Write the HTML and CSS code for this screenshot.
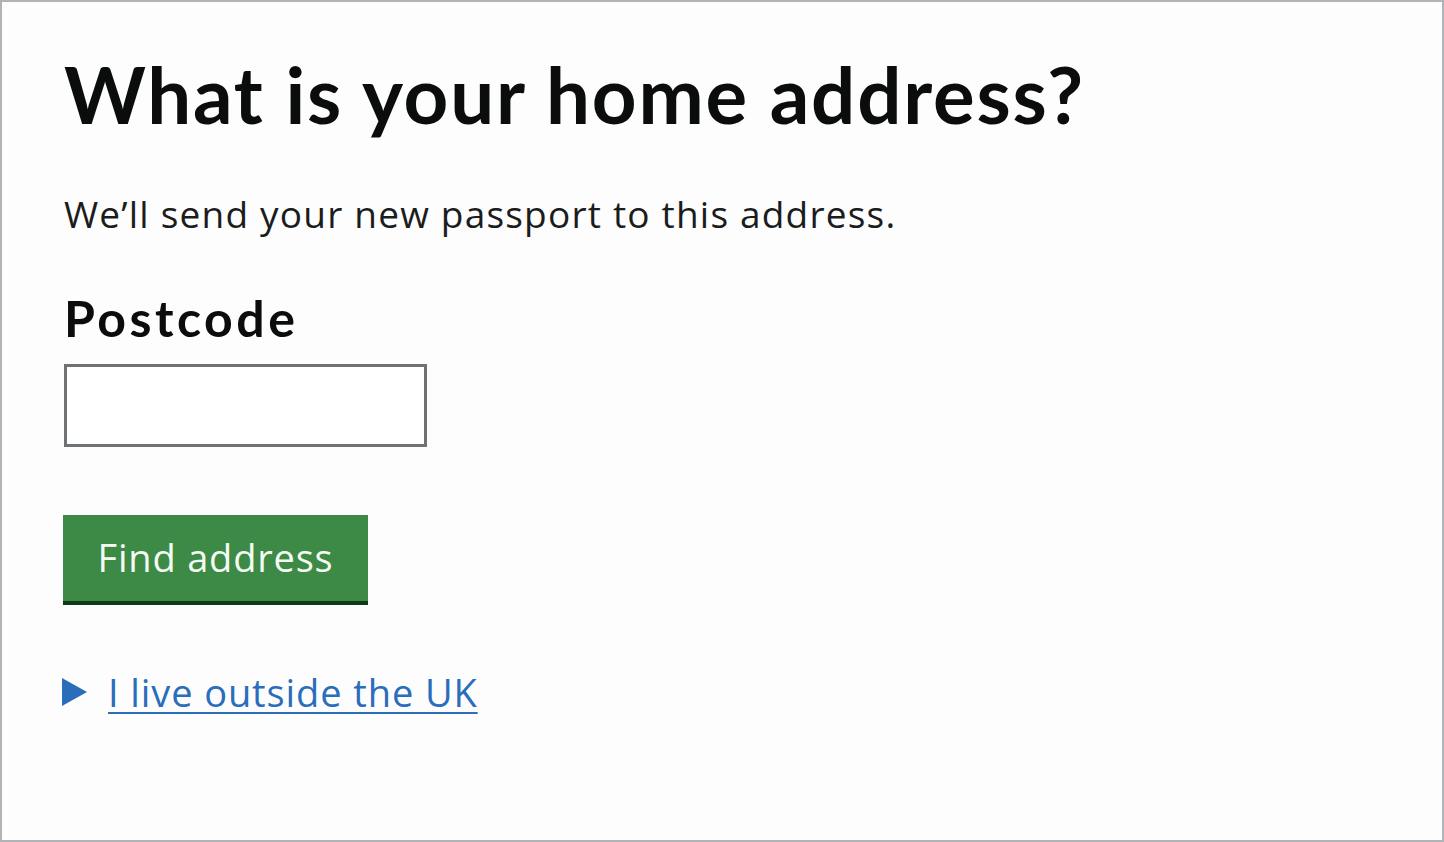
FILE: index.html
```html
<!DOCTYPE html>
<html lang="en">
<head>
<meta charset="utf-8">
<title>What is your home address?</title>
<link rel="stylesheet" href="styles.css">
</head>
<body>
<main class="frame">
  <h1 class="heading">What is your home address?</h1>
  <p class="hint">We’ll send your new passport to this address.</p>
  <label class="label" for="postcode">Postcode</label>
  <input class="input" id="postcode" type="text">
  <button class="button" type="button">Find address</button>
  <div class="details">
    <svg class="arrow" width="25" height="28" viewBox="0 0 25 28" aria-hidden="true"><polygon points="0,0 25,14 0,28" fill="#2a6ebb"/></svg>
    <a class="link" href="#">I live outside the UK</a>
  </div>
</main>
</body>
</html>
```

FILE: styles.css
```css
* { box-sizing: border-box; }
html, body { margin: 0; padding: 0; }
body {
  width: 1444px;
  height: 842px;
  background: #fdfdfd;
  font-family: Lato, "Open Sans", Arial, sans-serif;
  color: #0b0c0c;
}
.frame {
  width: 1444px;
  height: 842px;
  border: 2px solid #b1b4b6;
  padding: 47px 0 0 62px;
  display: flex;
  flex-direction: column;
  align-items: flex-start;
}
.heading {
  margin: 0;
  font-size: 78px;
  line-height: 90px;
  font-weight: 700;
  letter-spacing: 1.8px;
}
.hint {
  margin: 52px 0 0;
  font-family: "Open Sans", Lato, sans-serif;
  font-size: 37px;
  line-height: 46px;
  font-weight: 400;
  letter-spacing: 1.2px;
  color: #1b1c1c;
}
.label {
  margin-top: 53px;
  font-size: 50px;
  line-height: 56px;
  font-weight: 700;
  letter-spacing: 3.5px;
}
.input {
  margin-top: 18px;
  width: 363px;
  height: 83px;
  border: 3px solid #6f7275;
  background: #fff;
}
.button {
  margin-top: 68px;
  margin-left: -1px;
  width: 305px;
  height: 86px;
  border: 0;
  box-shadow: 0 4px 0 #0b3b18;
  background: #3d8a47;
  color: #f4fbf2;
  font-family: "Open Sans", Lato, sans-serif;
  font-size: 38px;
  letter-spacing: 0.8px;
  padding: 0 0 2px;
}
.details {
  margin-top: 67px;
  margin-left: -2px;
  display: flex;
  align-items: center;
  gap: 21px;
}
.arrow { display: block; }
.link {
  color: #2a6ebb;
  font-family: "Open Sans", Lato, sans-serif;
  font-size: 38px;
  line-height: 48px;
  letter-spacing: 0.9px;
  text-decoration: underline;
  text-decoration-thickness: 2px;
  text-underline-offset: 5px;
}
```
